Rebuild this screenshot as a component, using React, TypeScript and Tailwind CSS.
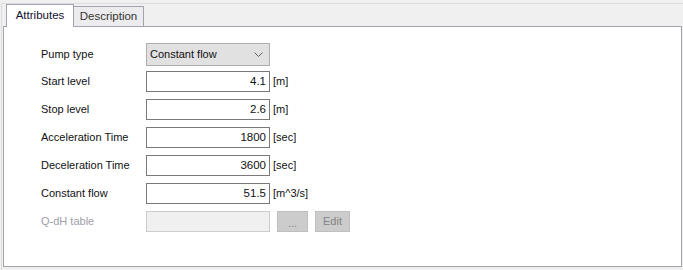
import React from "react";

const rows = [
  { label: "Start level", value: "4.1", unit: "[m]" },
  { label: "Stop level", value: "2.6", unit: "[m]" },
  { label: "Acceleration Time", value: "1800", unit: "[sec]" },
  { label: "Deceleration Time", value: "3600", unit: "[sec]" },
  { label: "Constant flow", value: "51.5", unit: "[m^3/s]" },
];

export default function App() {
  return (
    <div className="w-[683px] h-[270px] bg-[#f0f0f0] overflow-hidden font-['Liberation_Sans',Arial,sans-serif] text-[11px] text-[#111]">
      <div className="mt-[3px] ml-[1px] h-[267px] border-t border-l border-[#dcdcdc]">
        {/* tabs */}
        <div className="flex items-end h-[22px] pl-[4px]">
          <div className="relative z-10 h-[23px] w-[68px] -mb-px bg-white border border-b-0 border-[#a3a3ad] flex items-center justify-center pb-[1px] text-[11.5px] text-[#101030]">
            Attributes
          </div>
          <div className="h-[20px] w-[71px] -ml-px bg-[#ececee] border border-b-0 border-[#a3a3ad] flex items-center justify-center text-[11.5px] text-[#333]">
            Description
          </div>
        </div>

        {/* panel */}
        <div className="ml-[1px] w-[679px] h-[241px] bg-white border border-[#a3a3ad] pt-[16px] pl-[37px]">
          <div className="flex items-center h-[23px]">
            <span className="w-[105px]">Pump type</span>
            <div className="w-[124px] h-[23px] bg-[#e1e1e1] border border-[#adadad] flex items-center justify-between pl-[3px] pr-[6px]">
              <span>Constant flow</span>
              <svg width="9" height="5" viewBox="0 0 9 5" className="text-[#606060]">
                <path d="M0.5 0.5 L4.5 4.5 L8.5 0.5" fill="none" stroke="currentColor" strokeWidth="1" />
              </svg>
            </div>
          </div>

          {rows.map((r, i) => (
            <div key={r.label} className={`flex items-center h-[21px] ${i === 0 ? "mt-[5px]" : "mt-[7px]"}`}>
              <span className="w-[105px]">{r.label}</span>
              <div className="w-[124px] h-[21px] border border-[#7a7a7a] bg-white flex items-center justify-end pr-[3px] text-[11.5px]">
                {r.value}
              </div>
              <span className="ml-[3px]">{r.unit}</span>
            </div>
          ))}

          <div className="flex items-center h-[21px] mt-[7px]">
            <span className="w-[105px] text-[#a0a0a8]">Q-dH table</span>
            <div className="w-[124px] h-[21px] border border-[#cccccc] bg-[#f0f0f0]" />
            <div className="ml-[7px] w-[31px] h-[21px] bg-[#cccccc] border border-[#bfbfbf] flex items-center justify-center text-[#838383] pt-[3px]">
              ...
            </div>
            <div className="ml-[7px] w-[35px] h-[21px] bg-[#cccccc] border border-[#bfbfbf] flex items-center justify-center text-[#838383]">
              Edit
            </div>
          </div>
        </div>
      </div>
    </div>
  );
}
